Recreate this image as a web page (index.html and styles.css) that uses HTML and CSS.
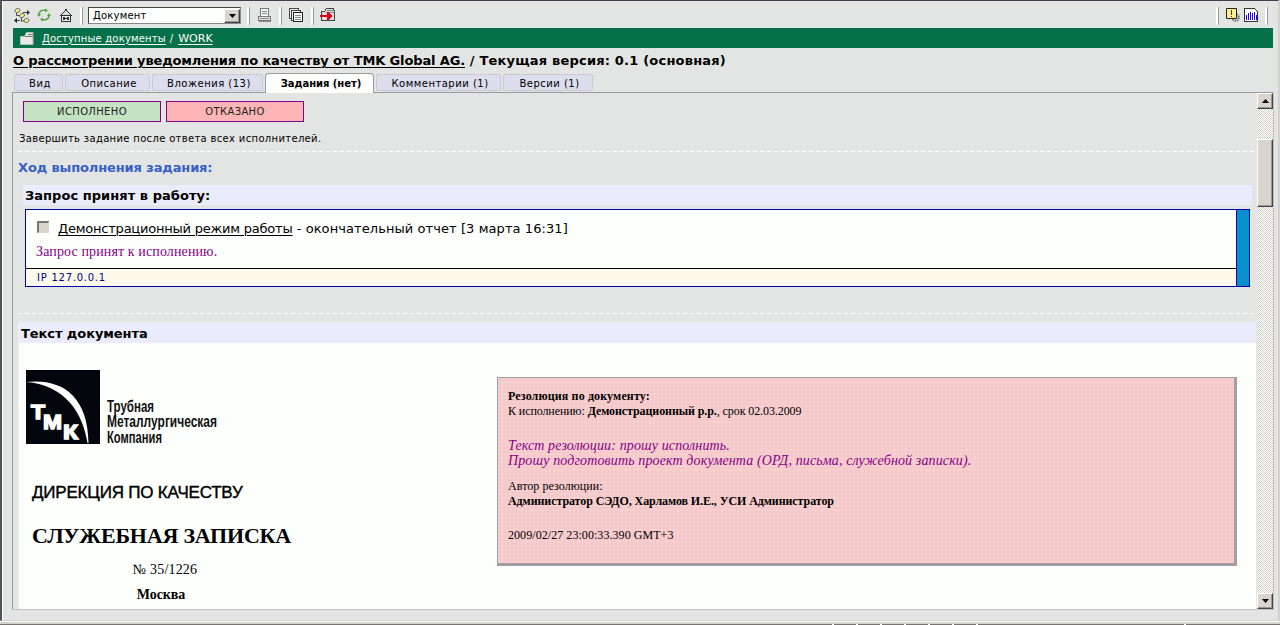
FILE: index.html
```html
<!DOCTYPE html>
<html lang="ru">
<head>
<meta charset="utf-8">
<title>Документ</title>
<link rel="stylesheet" href="styles.css">
</head>
<body>
<div class="window">
  <header class="toolbar">
    <svg class="ico tree" width="16" height="15" viewBox="0 0 16 15"><path d="M2.500 5v2.500H6M7.500 10v3H11M9 4.500h5.500M1 12.500h5" fill="none" stroke="#444"/><path d="M13 2l3 2.500L13 7zM3 10l-3 2.500L3 15z" fill="#222"/><g fill="#f2ec86" stroke="#555" stroke-width=".8"><ellipse cx="3.500" cy="2.500" rx="2.600" ry="2" transform="rotate(-25 3.500 2.500)"/><ellipse cx="8" cy="7.500" rx="2.600" ry="2" transform="rotate(-25 8 7.500)"/><ellipse cx="12.500" cy="12.500" rx="2.600" ry="2" transform="rotate(-25 12.500 12.500)"/></g></svg>
    <svg class="ico refresh" width="14" height="14" viewBox="0 0 14 14"><g fill="none" stroke="#4d9b38" stroke-width="1.300"><path d="M1.800 7C1.800 3.500 4.500 1.700 8.500 2.300"/><path d="M12.200 7C12.200 10.500 9.500 12.300 5.500 11.700"/></g><path d="M0 6h4L2 9zM14 8h-4l2-3zM8 .5l3 2L8 4.500zM6 13.500l-3-2l3-2z" fill="#4fa83a"/></svg>
    <svg class="ico house" width="12" height="13" viewBox="0 0 12 13" shape-rendering="crispEdges"><path d="M1 7h10v6H1z" fill="#333"/><path d="M2 6h8v6H2z" fill="#eee"/><path d="M5 0h2v2H5zM4 2h1v1H4zM7 2h1v1H7zM3 3h1v1H3zM8 3h1v1H8zM2 4h1v1H2zM9 4h1v1H9zM1 5h1v1H1zM10 5h1v1h-1zM0 6h12v1H0zM3 8h2v3H3zM7 8h2v3H7zM5 9h2v1H5z" fill="#333"/><path d="M5 2h2v1h1v1h1v2H3V4h1V3h1z" fill="#ddd"/></svg>
    <i class="sep s1"></i>
    <div class="select"><span>Документ</span><b class="drop"><svg width="7" height="4" viewBox="0 0 7 4"><path d="M0 0h7L3.500 4z"/></svg></b></div>
    <i class="sep s2"></i>
    <svg class="ico printer" width="14" height="14" viewBox="0 0 14 14" shape-rendering="crispEdges"><path d="M2.500 8.500V.5h8v8z" fill="#f6f6f6" stroke="#777"/><path d="M4 3.500h5M4 5.500h5" stroke="#888"/><path d="M.5 8.500h12v4H.5z" fill="#e4e4e4" stroke="#777"/><path d="M2 10.500h9M1 13.500h12" stroke="#888"/></svg>
    <i class="sep s3"></i>
    <svg class="ico copy" width="15" height="15" viewBox="0 0 15 15" shape-rendering="crispEdges"><path d="M.5.500h9v10h-9z" fill="#eee" stroke="#444"/><path d="M2.500 2.500h9v10h-9z" fill="#eee" stroke="#444"/><path d="M4.500 4.500h9v9h-9z" fill="#fff" stroke="#222"/><path d="M6 7.500h6M6 9.500h6M6 11.500h6" stroke="#888"/></svg>
    <i class="sep s4"></i>
    <svg class="ico export" width="16" height="14" viewBox="0 0 16 14" shape-rendering="crispEdges"><path d="M1.500 12.500v-9h3l2-3h7v2h1v10z" fill="#ddd" stroke="#444"/><path d="M7 2.500h7M6 4.500h8" stroke="#888"/><path d="M0 7h7V4h1l4 4l-4 4H7V9H0z" fill="#e00012"/></svg>
    <i class="sep s5"></i>
    <svg class="ico alert" width="14" height="14" viewBox="0 0 14 14"><circle cx="9.500" cy="9.500" r="3.300" fill="none" stroke="#777" stroke-width="2.200" stroke-dasharray="1.500 .8"/><path d="M.5.500h10v10H.5z" fill="#f8f48c" stroke="#222"/><path d="M5 2h1v5H5zM5 8h1v1H5z" fill="#d00020"/></svg>
    <svg class="ico chart" width="14" height="14" viewBox="0 0 14 14" shape-rendering="crispEdges"><path d="M.5.500h10l3 3v10H.5z" fill="#fff" stroke="#333"/><path d="M2 7h1v5H2zM4 5h1v7H4zM6 4h1v8H6zM8 5h1v7H8zM10 4h1v8h-1zM12 7h1v5h-1z" fill="#20f"/></svg>
    <i class="sep s6"></i>
  </header>
  <nav class="crumbs"><svg width="14" height="13" viewBox="0 0 14 13"><path d="M.5 12.500v-8h4l2-4h6.500v12z" fill="#e8e8e8" stroke="#bbb"/><path d="M5 4.500h8M8 2.500h5" stroke="#777"/></svg><a class="docs">Доступные документы</a><span>/</span><a class="work">WORK</a></nav>
  <h1><a>О рассмотрении уведомления по качеству от TMK Global AG.</a><span> / Текущая версия: 0.1 (основная)</span></h1>
  <div class="tabs"><span class="t1">Вид</span><span class="t2">Описание</span><span class="t3">Вложения (13)</span><span class="active">Задания (нет)</span><span class="t5">Комментарии (1)</span><span class="t6">Версии (1)</span></div>
  <div class="pane">
    <main>
      <div class="buttons"><span class="ok">ИСПОЛНЕНО</span><span class="no">ОТКАЗАНО</span></div>
      <p class="note">Завершить задание после ответа всех исполнителей.</p>
      <div class="dash"></div>
      <h2>Ход выполнения задания:</h2>
      <h3>Запрос принят в работу:</h3>
      <section class="task">
        <div class="report">
          <div class="body">
            <div class="who"><i class="check"></i><a>Демонстрационный режим работы</a><span class="rest"> - окончательный отчет [3 марта 16:31]</span></div>
            <p>Запрос принят к исполнению.</p>
          </div>
          <div class="ip">IP 127.0.0.1</div>
        </div>
        <div class="stripe"></div>
      </section>
      <div class="dash second"></div>
      <article>
        <h4>Текст документа</h4>
        <div class="doc">
          <div class="letter">
            <svg class="logo" width="220" height="78" viewBox="0 0 220 78">
              <rect width="74" height="74" fill="#03070d"/>
              <path d="M0 12C34 8 62 24 62.500 73H61.500C57 44 40 15 0 12z" fill="#fcfffc"/>
              <g fill="#fcfffc" class="tmk"><text x="5" y="49" textLength="14" lengthAdjust="spacingAndGlyphs">Т</text><text x="17" y="59" textLength="19" lengthAdjust="spacingAndGlyphs">М</text><text x="37" y="69" textLength="15" lengthAdjust="spacingAndGlyphs">К</text></g>
              <g fill="#111" class="company"><text x="81" y="41.500" textLength="47" lengthAdjust="spacingAndGlyphs">Трубная</text><text x="81" y="57" textLength="110" lengthAdjust="spacingAndGlyphs">Металлургическая</text><text x="81" y="72.500" textLength="55" lengthAdjust="spacingAndGlyphs">Компания</text></g>
            </svg>
            <div class="dept">ДИРЕКЦИЯ ПО КАЧЕСТВУ</div>
            <div class="memo">СЛУЖЕБНАЯ ЗАПИСКА</div>
            <div class="num">№ 35/1226</div>
            <div class="city">Москва</div>
          </div>
          <aside>
            <div><b class="r1">Резолюция по документу:</b></div>
            <div class="r2">К исполнению: <b>Демонстрационный р.р.</b>, срок 02.03.2009</div>
            <div class="quote">Текст резолюции: прошу исполнить.<br>Прошу подготовить проект документа (ОРД, письма, служебной записки).</div>
            <div class="r3">Автор резолюции:</div>
            <div><b class="r4">Администратор СЭДО, Харламов И.Е., УСИ Администратор</b></div>
            <div class="stamp">2009/02/27 23:00:33.390 GMT+3</div>
          </aside>
        </div>
      </article>
    </main>
    <div class="scroll"><b class="arrow"><svg width="7" height="4" viewBox="0 0 7 4"><path d="M0 4h7L3.500 0z"/></svg></b><b class="thumb"></b><b class="arrow down"><svg width="7" height="4" viewBox="0 0 7 4"><path d="M0 0h7L3.500 4z"/></svg></b></div>
  </div>
</div>
<footer><i class="f1"></i><i></i><i></i><i></i><i></i><i></i><i></i><i class="f2"></i><i class="f3"></i></footer>
</body>
</html>
```
FILE: styles.css
```css
* { box-sizing: border-box; }
body { margin: 0; width: 1280px; height: 625px; overflow: hidden; background: #d6d3ce; font-family: "DejaVu Sans", sans-serif; color: #000; display: flex; flex-direction: column; }
h1, h2, h3, h4, p { margin: 0; }
a { text-decoration: underline; text-underline-offset: 2px; text-decoration-thickness: 1px; white-space: nowrap; }
svg { display: block; flex: none; }
.window { height: 621px; width: 1279px; border-top: 1px solid #45404a; border-left: 2px solid #55515a; border-right: 1px solid #d0d0c8; border-bottom: 1px solid #d0d0c8; background: #e3e5e4; box-shadow: inset 1px 0 #fff; padding-left: 10px; }

.toolbar { height: 27px; padding: 0 10px 0 2px; display: flex; align-items: center; }
.ico { margin-top: 1px; }
.refresh { margin-left: 7px; }
.house { margin-left: 9px; }
.sep { width: 3px; height: 18px; flex: none; background: linear-gradient(90deg, #fff 2px, #999 2px); margin-top: 2px; }
.s1 { margin-left: 8px; }
.select { margin: 2px 0 0 5px; width: 153px; height: 17px; border: 1px solid #888; border-top-color: #444; border-left-color: #444; background: #fcfffc; display: flex; align-items: center; justify-content: space-between; font-size: 10px; padding-left: 4px; letter-spacing: .2px; }
.drop, .arrow, .thumb { width: 16px; background: #d9d4ce; border: 1px solid; border-color: #fff #45404a #45404a #fff; box-shadow: inset -1px -1px #9a9795; display: flex; align-items: center; justify-content: center; }
.drop { height: 14px; }
.s2 { margin-left: 6px; }
.printer { margin-left: 8px; }
.s3 { margin-left: 7px; }
.copy { margin-left: 7px; }
.s4 { margin-left: 7px; }
.export { margin-left: 6px; }
.s5 { margin-left: auto; }
.alert { margin-left: 7px; }
.chart { margin-left: 4px; }
.s6 { margin-left: 7px; }

.crumbs { height: 20px; margin: 0 5px 0 1px; padding-left: 7px; background: #067048; color: #fcfffc; display: flex; align-items: center; font-size: 10px; }
.docs { margin-left: 8px; letter-spacing: .18px; }
.crumbs span { margin: 0 5px 0 4px; }
.work { font-size: 11px; }

h1 { height: 25px; line-height: 26px; padding-left: 1px; font-size: 13px; white-space: pre; letter-spacing: -.13px; }
h1 span { letter-spacing: .2px; }

.tabs { height: 19px; padding-left: 2px; display: flex; gap: 2px; align-items: flex-start; font-size: 10px; letter-spacing: .5px; }
.tabs span { height: 17px; margin-top: 1px; padding-left: 3px; line-height: 17px; text-align: center; white-space: nowrap; background: #dcdeed; border: 1px dotted #bdb2bd; border-radius: 2px; flex: none; }
.t1 { width: 49px; } .t2 { width: 85px; } .t3 { width: 111px; } .t5 { width: 125px; } .t6 { width: 90px; }
.tabs .active { position: relative; width: 109px; height: 20px; margin-top: 0; line-height: 19px; background: #fcfffc; border: 1px solid #999; border-bottom: 0; border-radius: 4px 4px 0 0; font-weight: bold; letter-spacing: -.05px; }

.pane { height: 518px; width: 1262px; border: 1px solid #999; border-right-color: #c0c0c0; border-bottom-color: #c6bfc6; display: flex; }
main { width: 1244px; padding: 8px 0 0 5px; overflow: hidden; flex: none; }
.buttons { display: flex; gap: 5px; padding-left: 5px; }
.buttons span { width: 138px; height: 21px; border: 1px solid #808; font-size: 10px; line-height: 20px; text-align: center; letter-spacing: .35px; color: #222; }
.ok { background: #c3e3c3; } .no { background: #fdb5b5; }
.note { height: 29px; padding: 10px 0 0 1px; line-height: 13px; font-size: 10px; letter-spacing: .33px; }
.dash { height: 1px; margin-right: 1px; background: repeating-linear-gradient(90deg, #fff 0 4px, transparent 4px 7px); }
h2 { height: 33px; line-height: 32px; font-size: 13px; color: #3660c6; letter-spacing: -.13px; }
h3 { height: 20px; width: 1229px; margin-left: 5px; padding-left: 2px; line-height: 22px; background: #ebecfb; font-size: 13px; letter-spacing: .04px; }
.task { width: 1225px; height: 78px; margin: 4px 0 0 7px; border: 1px solid #00a; display: flex; }
.report { flex: 1; background: #fcfffc; display: flex; flex-direction: column; }
.body { height: 58px; padding: 11px 0 0 11px; }
.who { display: flex; font-size: 13px; line-height: 16px; white-space: pre; letter-spacing: -.22px; }
.rest { letter-spacing: .08px; }
.check { width: 12px; height: 12px; margin-right: 9px; background: #d9d4ce; border: 1px solid #777; border-width: 2px 1px 1px 2px; border-right-color: #d9d4ce; border-bottom-color: #d9d4ce; }
.body p { font: 14px/18px "Liberation Serif", serif; color: #808; margin: 6px 0 0 -1px; letter-spacing: .12px; }
.ip { flex: 1; border-top: 1px solid #000; background: #fdf9eb; color: #008; font-size: 10px; line-height: 17px; padding-left: 11px; letter-spacing: .75px; }
.stripe { width: 13px; background: #0890cc; border-left: 1px solid #00a; }
.second { margin-top: 26px; }
article { margin: 8px 1px 0 0; background: #fcfffc; border-left: 1px solid #f0f1f4; height: 290px; }
h4 { height: 21px; line-height: 24px; padding-left: 2px; background: #ebecfb; font-size: 13px; letter-spacing: -.07px; }
.doc { display: flex; align-items: flex-start; padding: 27px 0 0 8px; }
.letter { width: 470px; }
.logo { margin-left: -1px; }
.tmk text { font: bold 21px "Liberation Sans", sans-serif; stroke: #fcfffc; stroke-width: 1.5px; }
.company text { font: bold 16px "Liberation Sans", sans-serif; }
.dept { margin: 33px 0 0 5px; font: 17px/24px "Liberation Sans", sans-serif; height: 24px; letter-spacing: -.2px; -webkit-text-stroke: .4px #000; }
.memo { margin: 17px 0 0 5px; font: bold 22px/28px "Liberation Serif", serif; height: 28px; letter-spacing: -.18px; }
.num, .city { width: 276px; text-align: center; font: 14px/20px "Liberation Serif", serif; }
.num { margin-top: 10px; letter-spacing: .2px; }
.city { margin-top: 5px; font-weight: bold; width: 268px; letter-spacing: -.1px; }
aside { width: 740px; height: 189px; margin-top: 7px; padding: 11px 0 0 10px; border: solid #a09ea0; border-width: 1px 3px 3px 1px; background: radial-gradient(circle, #dcc0cf .6px, transparent .8px) 0 0 / 4px 4px #f9cdcc; font: 12px/15px "Liberation Serif", serif; white-space: nowrap; }
.r1 { letter-spacing: .13px; }
.r2 { letter-spacing: -.09px; }
.quote { margin-top: 19px; font-style: italic; font-size: 14px; color: #808; letter-spacing: .13px; }
.r3 { margin-top: 11px; letter-spacing: .06px; }
.r4 { letter-spacing: -.08px; }
.stamp { margin-top: 19px; letter-spacing: .06px; }

.scroll { width: 16px; display: flex; flex-direction: column; background: repeating-conic-gradient(#fff 0 25%, #d4d0ca 0 50%) 0 0 / 2px 2px; }
.arrow { height: 16px; }
.thumb { height: 68px; margin-top: 30px; }
.down { margin-top: auto; }
footer { height: 4px; padding-top: 2px; border-top: 1px solid #fff; display: flex; gap: 2px; }
footer i { height: 2px; width: 22px; background: #77736f; box-shadow: -2px 0 #fff; }
footer .f1 { width: 832px; } footer .f2 { width: 206px; } footer .f3 { flex: 1; }
```
